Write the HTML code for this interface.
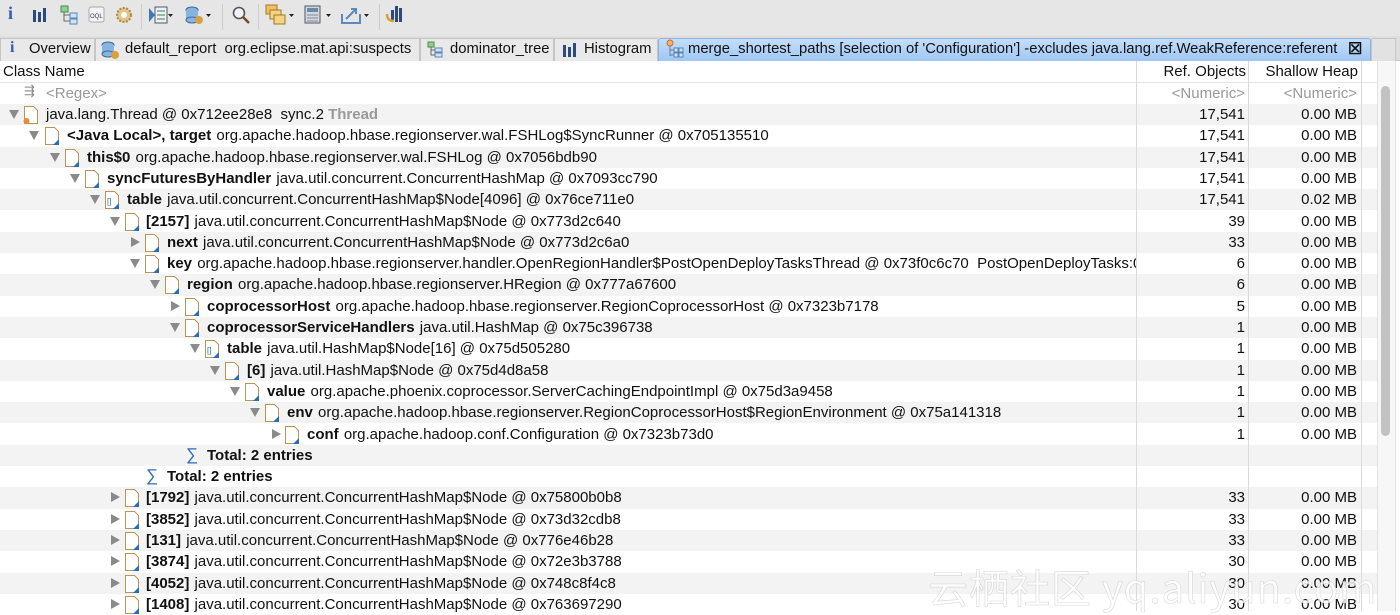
<!DOCTYPE html>
<html><head><meta charset="utf-8"><style>
*{margin:0;padding:0;box-sizing:border-box}
body{width:1400px;height:611px;overflow:hidden;background:#fff;font-family:"Liberation Sans",Arial,sans-serif;font-size:15px;color:#111;position:relative}
.tb{position:absolute;left:0;top:0;width:1400px;height:36px;background:#e6e6e6}
.tb span{position:absolute;top:6px}
.tabs{position:absolute;left:0;top:36px;width:1400px;height:25px;background:#dedede;border-bottom:1px solid #c8c8c8}
.tab{position:absolute;top:2px;height:23px;background:#e9e9e9;border:1px solid #c6c6c6;border-bottom:none;padding:2px 0 0 0;white-space:pre;font-size:14.8px}
.tab.act{background:linear-gradient(#c4defa,#9fc8f3);border-color:#8fb3dc;border-radius:3px 3px 0 0}
.hdr{position:absolute;top:61px;height:21px;left:0;width:1378px}
.row{position:absolute;left:0;width:1378px;height:21.3px;white-space:pre}
.row.g{background:#f3f3f3}
.nm{position:absolute;left:0;top:0;width:1136px;height:100%;overflow:hidden}
.t{position:absolute;top:2px;white-space:pre}
.tri{position:absolute;top:6px;width:0;height:0}
.dn{border-left:5.5px solid transparent;border-right:5.5px solid transparent;border-top:9px solid #8a8a8a}
.rt{border-top:5.5px solid transparent;border-bottom:5.5px solid transparent;border-left:9px solid #8a8a8a;top:5px}
.ic{position:absolute;top:1px}
.ref{position:absolute;right:133px;top:2px}
.sh{position:absolute;right:21px;top:2px}
b{font-weight:bold}
.t b{margin-right:1px}
.vl{position:absolute;top:61px;height:550px;width:1px;background:#dadada}
.gr{color:#999}
</style></head><body>
<div class="tb">
<span style="left:8px;color:#2f5fa8;font-weight:bold;font-family:'Liberation Serif';font-size:18px;top:3px">i</span>
<svg style="position:absolute;left:32px;top:7px" width="16" height="16"><rect x="1" y="3" width="3" height="12" fill="#2c4a7d"/><rect x="6" y="5" width="3" height="10" fill="#2c4a7d"/><rect x="11" y="1" width="3" height="14" fill="#2c4a7d"/></svg>
<svg style="position:absolute;left:60px;top:5px" width="18" height="20"><rect x="1" y="1" width="7" height="6" fill="#8fd08f" stroke="#4a8a4a"/><rect x="10" y="8" width="7" height="5" fill="#cfe3f5" stroke="#5a86b8"/><rect x="10" y="14" width="7" height="5" fill="#cfe3f5" stroke="#5a86b8"/><path d="M4 7v9h6M4 10h6" stroke="#666" fill="none"/></svg>
<svg style="position:absolute;left:88px;top:6px" width="18" height="18"><rect x="1" y="1" width="15" height="15" rx="2" fill="#f3f3f3" stroke="#aaa"/><text x="2" y="12" font-size="6" fill="#335" font-family="Liberation Sans">OQL</text></svg>
<svg style="position:absolute;left:114px;top:5px" width="20" height="20"><circle cx="10" cy="10" r="7" fill="#e3c48a" stroke="#b08640" stroke-dasharray="2 1.5" stroke-width="2"/><circle cx="10" cy="10" r="3" fill="#fff"/></svg>
<div style="position:absolute;left:141px;top:4px;width:1px;height:26px;background:#ccc"></div>
<svg style="position:absolute;left:148px;top:5px" width="26" height="20"><path d="M1 3l6 7-6 7z" fill="#3a7ab8"/><rect x="7" y="2" width="12" height="16" fill="#eef" stroke="#556"/><path d="M9 6h8M9 10h8M9 14h8" stroke="#3a8a3a"/><path d="M20 9h5l-2.5 3z" fill="#222"/></svg>
<svg style="position:absolute;left:184px;top:4px" width="30" height="22"><ellipse cx="8" cy="6" rx="6" ry="3" fill="#8ab4e0" stroke="#3a6aa0"/><rect x="2" y="6" width="12" height="10" fill="#8ab4e0"/><ellipse cx="8" cy="16" rx="6" ry="3" fill="#8ab4e0" stroke="#3a6aa0"/><circle cx="15" cy="16" r="4" fill="#d9a040"/><path d="M22 10h5l-2.5 3z" fill="#222"/></svg>
<div style="position:absolute;left:222px;top:4px;width:1px;height:26px;background:#ccc"></div>
<svg style="position:absolute;left:231px;top:5px" width="20" height="20"><circle cx="8" cy="8" r="5.5" fill="#eef4fa" stroke="#555" stroke-width="1.6"/><path d="M12 12l6 6" stroke="#7a4a20" stroke-width="2.5"/></svg>
<div style="position:absolute;left:258px;top:4px;width:1px;height:26px;background:#ccc"></div>
<svg style="position:absolute;left:265px;top:4px" width="32" height="22"><rect x="1" y="1" width="11" height="9" fill="#f0c060" stroke="#a07820"/><rect x="5" y="6" width="11" height="9" fill="#f6d486" stroke="#a07820"/><rect x="9" y="11" width="11" height="9" fill="#f6d486" stroke="#a07820"/><path d="M24 10h5l-2.5 3z" fill="#222"/></svg>
<svg style="position:absolute;left:304px;top:5px" width="30" height="20"><rect x="1" y="1" width="15" height="17" fill="#d0d8e0" stroke="#556"/><rect x="3" y="3" width="11" height="4" fill="#6a8aa8"/><path d="M3 10h11M3 13h11M3 16h11" stroke="#889" /><path d="M22 9h5l-2.5 3z" fill="#222"/></svg>
<svg style="position:absolute;left:340px;top:4px" width="32" height="22"><path d="M2 10v9h18v-9" fill="none" stroke="#5a8ac0" stroke-width="2"/><path d="M6 15l10-10M11 5h5v5" stroke="#5a8ac0" stroke-width="2" fill="none"/><path d="M24 10h5l-2.5 3z" fill="#222"/></svg>
<div style="position:absolute;left:379px;top:4px;width:1px;height:26px;background:#ccc"></div>
<svg style="position:absolute;left:385px;top:4px" width="20" height="20"><rect x="6" y="6" width="3" height="12" fill="#2c4a7d"/><rect x="10" y="2" width="3" height="16" fill="#2c4a7d"/><rect x="14" y="4" width="3" height="14" fill="#2c4a7d"/><path d="M2 10c0 6 4 7 7 7" stroke="#e0a030" stroke-width="2.5" fill="none"/></svg>
</div>
<div class="tabs">
<div class="tab" style="left:0;width:95px"><span style="position:absolute;left:9px;color:#2f5fa8;font-weight:bold;font-family:'Liberation Serif';font-size:16px;top:0">i</span><span style="position:absolute;left:28px">Overview</span></div>
<div class="tab" style="left:95px;width:325px"><svg style="position:absolute;left:5px;top:1px" width="20" height="20"><ellipse cx="7" cy="5" rx="6" ry="3" fill="#8ab4e0" stroke="#3a6aa0"/><rect x="1" y="5" width="12" height="9" fill="#8ab4e0"/><ellipse cx="7" cy="14" rx="6" ry="3" fill="#8ab4e0" stroke="#3a6aa0"/><circle cx="14" cy="15" r="4" fill="#d9a040"/></svg><span style="position:absolute;left:29px">default_report  org.eclipse.mat.api:suspects</span></div>
<div class="tab" style="left:420px;width:134px"><svg style="position:absolute;left:6px;top:2px" width="16" height="18"><rect x="1" y="1" width="6" height="5" fill="#8fd08f" stroke="#4a8a4a"/><rect x="8" y="7" width="7" height="4" fill="#cfe3f5" stroke="#5a86b8"/><rect x="8" y="12" width="7" height="4" fill="#cfe3f5" stroke="#5a86b8"/><path d="M4 6v8h4M4 9h4" stroke="#666" fill="none"/></svg><span style="position:absolute;left:29px">dominator_tree</span></div>
<div class="tab" style="left:554px;width:104px"><svg style="position:absolute;left:7px;top:3px" width="16" height="16"><rect x="1" y="3" width="3" height="12" fill="#2c4a7d"/><rect x="6" y="5" width="3" height="10" fill="#2c4a7d"/><rect x="11" y="1" width="3" height="14" fill="#2c4a7d"/></svg><span style="position:absolute;left:29px">Histogram</span></div>
<div class="tab act" style="left:658px;width:713px"><svg style="position:absolute;left:6px;top:0" width="20" height="20"><circle cx="5" cy="4" r="3" fill="#f5b070" stroke="#c07030"/><path d="M5 7v10M5 11h4M5 16h4" stroke="#779"/><rect x="9" y="9" width="4" height="4" fill="#cfe3f5" stroke="#5a86b8"/><rect x="9" y="14" width="4" height="4" fill="#cfe3f5" stroke="#5a86b8"/><rect x="14" y="9" width="4" height="4" fill="#cfe3f5" stroke="#5a86b8"/><rect x="14" y="14" width="4" height="4" fill="#cfe3f5" stroke="#5a86b8"/></svg><span style="position:absolute;left:29px">merge_shortest_paths [selection of 'Configuration'] -excludes java.lang.ref.WeakReference:referent</span><span style="position:absolute;left:689px;top:0;font-size:16px;font-weight:bold">☒</span></div>
<div class="tab" style="left:1371px;width:25px;background:#e2e2e2"></div>
</div>
<div class="hdr"><span style="position:absolute;left:3px;top:2px">Class Name</span><span style="position:absolute;right:132px;top:2px">Ref. Objects</span><span style="position:absolute;right:20px;top:2px">Shallow Heap</span></div>
<div style="position:absolute;top:82px;left:0;width:1378px;height:1px;background:#e4e4e4"></div>
<div class="row" style="top:83px"><span style="position:absolute;left:24px;top:0;color:#888;font-size:13px">⇶</span><span class="t gr" style="left:46px">&lt;Regex&gt;</span><span class="ref gr">&lt;Numeric&gt;</span><span class="sh gr">&lt;Numeric&gt;</span></div>

<div class="row g" style="top:104px"><div class="nm"><i class="tri dn" style="left:9px"></i><svg class="ic" style="left:23px" width="16" height="20"><path d="M1.5 1.5h9l4 4v13h-13z" fill="#fff" stroke="#b8935a"/><circle cx="3.5" cy="16" r="3" fill="#e88a3a"/></svg><span class="t" style="left:46px">java.lang.Thread @ 0x712ee28e8  sync.2 <span class="gr" style="font-weight:bold">Thread</span></span></div><span class="ref">17,541</span><span class="sh">0.00 MB</span></div>

<div class="row" style="top:125.3px"><div class="nm"><i class="tri dn" style="left:29px"></i><svg class="ic" style="left:44px" width="16" height="20"><path d="M1.5 1.5h9l4 4v13h-13z" fill="#fff" stroke="#b8935a"/><path d="M15 13v6h-6z" fill="#2a6fb5"/></svg><span class="t" style="left:67px"><b>&lt;Java Local&gt;, target</b> org.apache.hadoop.hbase.regionserver.wal.FSHLog$SyncRunner @ 0x705135510</span></div><span class="ref">17,541</span><span class="sh">0.00 MB</span></div>

<div class="row g" style="top:146.6px"><div class="nm"><i class="tri dn" style="left:50px"></i><svg class="ic" style="left:64px" width="16" height="20"><path d="M1.5 1.5h9l4 4v13h-13z" fill="#fff" stroke="#b8935a"/><path d="M15 13v6h-6z" fill="#2a6fb5"/></svg><span class="t" style="left:87px"><b>this$0</b> org.apache.hadoop.hbase.regionserver.wal.FSHLog @ 0x7056bdb90</span></div><span class="ref">17,541</span><span class="sh">0.00 MB</span></div>

<div class="row" style="top:167.9px"><div class="nm"><i class="tri dn" style="left:70px"></i><svg class="ic" style="left:84px" width="16" height="20"><path d="M1.5 1.5h9l4 4v13h-13z" fill="#fff" stroke="#b8935a"/><path d="M15 13v6h-6z" fill="#2a6fb5"/></svg><span class="t" style="left:107px"><b>syncFuturesByHandler</b> java.util.concurrent.ConcurrentHashMap @ 0x7093cc790</span></div><span class="ref">17,541</span><span class="sh">0.00 MB</span></div>

<div class="row g" style="top:189.2px"><div class="nm"><i class="tri dn" style="left:90px"></i><svg class="ic" style="left:104px" width="16" height="20"><path d="M1.5 1.5h9l4 4v13h-13z" fill="#fff" stroke="#b8935a"/><text x="3" y="14" font-size="8" fill="#2a6fb5" font-family="Liberation Sans">[]</text><path d="M15 13v6h-6z" fill="#2a6fb5"/></svg><span class="t" style="left:127px"><b>table</b> java.util.concurrent.ConcurrentHashMap$Node[4096] @ 0x76ce711e0</span></div><span class="ref">17,541</span><span class="sh">0.02 MB</span></div>

<div class="row" style="top:210.5px"><div class="nm"><i class="tri dn" style="left:110px"></i><svg class="ic" style="left:124px" width="16" height="20"><path d="M1.5 1.5h9l4 4v13h-13z" fill="#fff" stroke="#b8935a"/><path d="M15 13v6h-6z" fill="#2a6fb5"/></svg><span class="t" style="left:146px"><b>[2157]</b> java.util.concurrent.ConcurrentHashMap$Node @ 0x773d2c640</span></div><span class="ref">39</span><span class="sh">0.00 MB</span></div>

<div class="row g" style="top:231.8px"><div class="nm"><i class="tri rt" style="left:131px"></i><svg class="ic" style="left:144px" width="16" height="20"><path d="M1.5 1.5h9l4 4v13h-13z" fill="#fff" stroke="#b8935a"/><path d="M15 13v6h-6z" fill="#2a6fb5"/></svg><span class="t" style="left:167px"><b>next</b> java.util.concurrent.ConcurrentHashMap$Node @ 0x773d2c6a0</span></div><span class="ref">33</span><span class="sh">0.00 MB</span></div>

<div class="row" style="top:253.1px"><div class="nm"><i class="tri dn" style="left:130px"></i><svg class="ic" style="left:144px" width="16" height="20"><path d="M1.5 1.5h9l4 4v13h-13z" fill="#fff" stroke="#b8935a"/><path d="M15 13v6h-6z" fill="#2a6fb5"/></svg><span class="t" style="left:167px"><b>key</b> org.apache.hadoop.hbase.regionserver.handler.OpenRegionHandler$PostOpenDeployTasksThread @ 0x73f0c6c70  PostOpenDeployTasks:0c2b14a8</span></div><span class="ref">6</span><span class="sh">0.00 MB</span></div>

<div class="row g" style="top:274.4px"><div class="nm"><i class="tri dn" style="left:150px"></i><svg class="ic" style="left:164px" width="16" height="20"><path d="M1.5 1.5h9l4 4v13h-13z" fill="#fff" stroke="#b8935a"/><path d="M15 13v6h-6z" fill="#2a6fb5"/></svg><span class="t" style="left:187px"><b>region</b> org.apache.hadoop.hbase.regionserver.HRegion @ 0x777a67600</span></div><span class="ref">6</span><span class="sh">0.00 MB</span></div>

<div class="row" style="top:295.7px"><div class="nm"><i class="tri rt" style="left:171px"></i><svg class="ic" style="left:184px" width="16" height="20"><path d="M1.5 1.5h9l4 4v13h-13z" fill="#fff" stroke="#b8935a"/><path d="M15 13v6h-6z" fill="#2a6fb5"/></svg><span class="t" style="left:207px"><b>coprocessorHost</b> org.apache.hadoop.hbase.regionserver.RegionCoprocessorHost @ 0x7323b7178</span></div><span class="ref">5</span><span class="sh">0.00 MB</span></div>

<div class="row g" style="top:317px"><div class="nm"><i class="tri dn" style="left:170px"></i><svg class="ic" style="left:184px" width="16" height="20"><path d="M1.5 1.5h9l4 4v13h-13z" fill="#fff" stroke="#b8935a"/><path d="M15 13v6h-6z" fill="#2a6fb5"/></svg><span class="t" style="left:207px"><b>coprocessorServiceHandlers</b> java.util.HashMap @ 0x75c396738</span></div><span class="ref">1</span><span class="sh">0.00 MB</span></div>

<div class="row" style="top:338.3px"><div class="nm"><i class="tri dn" style="left:190px"></i><svg class="ic" style="left:204px" width="16" height="20"><path d="M1.5 1.5h9l4 4v13h-13z" fill="#fff" stroke="#b8935a"/><text x="3" y="14" font-size="8" fill="#2a6fb5" font-family="Liberation Sans">[]</text><path d="M15 13v6h-6z" fill="#2a6fb5"/></svg><span class="t" style="left:227px"><b>table</b> java.util.HashMap$Node[16] @ 0x75d505280</span></div><span class="ref">1</span><span class="sh">0.00 MB</span></div>

<div class="row g" style="top:359.6px"><div class="nm"><i class="tri dn" style="left:210px"></i><svg class="ic" style="left:224px" width="16" height="20"><path d="M1.5 1.5h9l4 4v13h-13z" fill="#fff" stroke="#b8935a"/><path d="M15 13v6h-6z" fill="#2a6fb5"/></svg><span class="t" style="left:247px"><b>[6]</b> java.util.HashMap$Node @ 0x75d4d8a58</span></div><span class="ref">1</span><span class="sh">0.00 MB</span></div>

<div class="row" style="top:380.9px"><div class="nm"><i class="tri dn" style="left:230px"></i><svg class="ic" style="left:244px" width="16" height="20"><path d="M1.5 1.5h9l4 4v13h-13z" fill="#fff" stroke="#b8935a"/><path d="M15 13v6h-6z" fill="#2a6fb5"/></svg><span class="t" style="left:267px"><b>value</b> org.apache.phoenix.coprocessor.ServerCachingEndpointImpl @ 0x75d3a9458</span></div><span class="ref">1</span><span class="sh">0.00 MB</span></div>

<div class="row g" style="top:402.2px"><div class="nm"><i class="tri dn" style="left:250px"></i><svg class="ic" style="left:264px" width="16" height="20"><path d="M1.5 1.5h9l4 4v13h-13z" fill="#fff" stroke="#b8935a"/><path d="M15 13v6h-6z" fill="#2a6fb5"/></svg><span class="t" style="left:287px"><b>env</b> org.apache.hadoop.hbase.regionserver.RegionCoprocessorHost$RegionEnvironment @ 0x75a141318</span></div><span class="ref">1</span><span class="sh">0.00 MB</span></div>

<div class="row" style="top:423.5px"><div class="nm"><i class="tri rt" style="left:272px"></i><svg class="ic" style="left:284px" width="16" height="20"><path d="M1.5 1.5h9l4 4v13h-13z" fill="#fff" stroke="#b8935a"/><path d="M15 13v6h-6z" fill="#2a6fb5"/></svg><span class="t" style="left:307px"><b>conf</b> org.apache.hadoop.conf.Configuration @ 0x7323b73d0</span></div><span class="ref">1</span><span class="sh">0.00 MB</span></div>

<div class="row g" style="top:444.8px"><div class="nm"><span class="t" style="left:186px;top:0;font-size:17px;color:#2a6fb5">∑</span><span class="t" style="left:207px"><b>Total: 2 entries</b></span></div></div>

<div class="row" style="top:466.1px"><div class="nm"><span class="t" style="left:146px;top:0;font-size:17px;color:#2a6fb5">∑</span><span class="t" style="left:167px"><b>Total: 2 entries</b></span></div></div>

<div class="row g" style="top:487.4px"><div class="nm"><i class="tri rt" style="left:111px"></i><svg class="ic" style="left:124px" width="16" height="20"><path d="M1.5 1.5h9l4 4v13h-13z" fill="#fff" stroke="#b8935a"/><path d="M15 13v6h-6z" fill="#2a6fb5"/></svg><span class="t" style="left:146px"><b>[1792]</b> java.util.concurrent.ConcurrentHashMap$Node @ 0x75800b0b8</span></div><span class="ref">33</span><span class="sh">0.00 MB</span></div>

<div class="row" style="top:508.7px"><div class="nm"><i class="tri rt" style="left:111px"></i><svg class="ic" style="left:124px" width="16" height="20"><path d="M1.5 1.5h9l4 4v13h-13z" fill="#fff" stroke="#b8935a"/><path d="M15 13v6h-6z" fill="#2a6fb5"/></svg><span class="t" style="left:146px"><b>[3852]</b> java.util.concurrent.ConcurrentHashMap$Node @ 0x73d32cdb8</span></div><span class="ref">33</span><span class="sh">0.00 MB</span></div>

<div class="row g" style="top:530px"><div class="nm"><i class="tri rt" style="left:111px"></i><svg class="ic" style="left:124px" width="16" height="20"><path d="M1.5 1.5h9l4 4v13h-13z" fill="#fff" stroke="#b8935a"/><path d="M15 13v6h-6z" fill="#2a6fb5"/></svg><span class="t" style="left:146px"><b>[131]</b> java.util.concurrent.ConcurrentHashMap$Node @ 0x776e46b28</span></div><span class="ref">33</span><span class="sh">0.00 MB</span></div>

<div class="row" style="top:551.3px"><div class="nm"><i class="tri rt" style="left:111px"></i><svg class="ic" style="left:124px" width="16" height="20"><path d="M1.5 1.5h9l4 4v13h-13z" fill="#fff" stroke="#b8935a"/><path d="M15 13v6h-6z" fill="#2a6fb5"/></svg><span class="t" style="left:146px"><b>[3874]</b> java.util.concurrent.ConcurrentHashMap$Node @ 0x72e3b3788</span></div><span class="ref">30</span><span class="sh">0.00 MB</span></div>

<div class="row g" style="top:572.6px"><div class="nm"><i class="tri rt" style="left:111px"></i><svg class="ic" style="left:124px" width="16" height="20"><path d="M1.5 1.5h9l4 4v13h-13z" fill="#fff" stroke="#b8935a"/><path d="M15 13v6h-6z" fill="#2a6fb5"/></svg><span class="t" style="left:146px"><b>[4052]</b> java.util.concurrent.ConcurrentHashMap$Node @ 0x748c8f4c8</span></div><span class="ref">30</span><span class="sh">0.00 MB</span></div>

<div class="row" style="top:593.9px"><div class="nm"><i class="tri rt" style="left:111px"></i><svg class="ic" style="left:124px" width="16" height="20"><path d="M1.5 1.5h9l4 4v13h-13z" fill="#fff" stroke="#b8935a"/><path d="M15 13v6h-6z" fill="#2a6fb5"/></svg><span class="t" style="left:146px"><b>[1408]</b> java.util.concurrent.ConcurrentHashMap$Node @ 0x763697290</span></div><span class="ref">30</span><span class="sh">0.00 MB</span></div>

<div class="vl" style="left:1136px"></div>
<div class="vl" style="left:1248px"></div>
<div class="vl" style="left:1361px"></div>
<div style="position:absolute;left:1377px;top:61px;width:19px;height:550px;background:#f7f7f7;border-left:1px solid #e2e2e2;border-right:1px solid #e2e2e2"></div>
<div style="position:absolute;left:1381px;top:86px;width:9px;height:350px;background:#c2c2c2;border-radius:5px"></div>
<div style="position:absolute;left:928px;top:557px;font-family:'Noto Sans CJK SC',sans-serif;font-size:40px;color:rgba(255,255,255,0.8);-webkit-text-stroke:0.6px rgba(170,170,170,0.45);white-space:nowrap;letter-spacing:1px">云栖社区 yq.aliyun.com</div>
</body></html>
